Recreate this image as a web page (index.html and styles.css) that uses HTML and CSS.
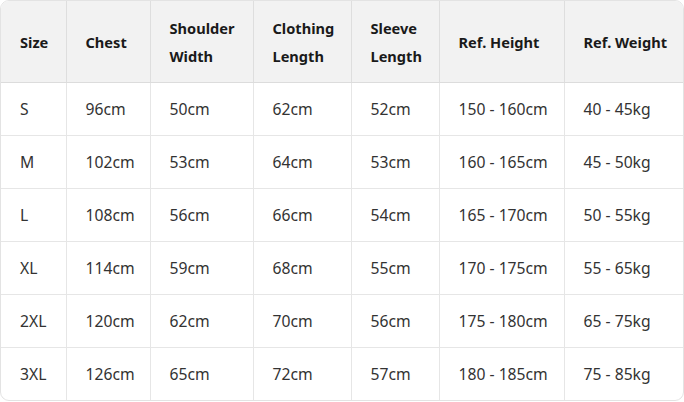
FILE: index.html
```html
<!DOCTYPE html>
<html>
<head>
<meta charset="utf-8">
<link rel="stylesheet" href="styles.css">
</head>
<body>
<div class="wrap">
<table class="size-table">
<colgroup>
<col class="c1"><col class="c2"><col class="c3"><col class="c4"><col class="c5"><col class="c6"><col class="c7">
</colgroup>
<thead>
<tr><th>Size</th><th>Chest</th><th>Shoulder Width</th><th>Clothing Length</th><th>Sleeve Length</th><th>Ref. Height</th><th>Ref. Weight</th></tr>
</thead>
<tbody>
<tr><td>S</td><td>96cm</td><td>50cm</td><td>62cm</td><td>52cm</td><td>150 - 160cm</td><td>40 - 45kg</td></tr>
<tr><td>M</td><td>102cm</td><td>53cm</td><td>64cm</td><td>53cm</td><td>160 - 165cm</td><td>45 - 50kg</td></tr>
<tr><td>L</td><td>108cm</td><td>56cm</td><td>66cm</td><td>54cm</td><td>165 - 170cm</td><td>50 - 55kg</td></tr>
<tr><td>XL</td><td>114cm</td><td>59cm</td><td>68cm</td><td>55cm</td><td>170 - 175cm</td><td>55 - 65kg</td></tr>
<tr><td>2XL</td><td>120cm</td><td>62cm</td><td>70cm</td><td>56cm</td><td>175 - 180cm</td><td>65 - 75kg</td></tr>
<tr><td>3XL</td><td>126cm</td><td>65cm</td><td>72cm</td><td>57cm</td><td>180 - 185cm</td><td>75 - 85kg</td></tr>
</tbody>
</table>
</div>
</body>
</html>
```

FILE: styles.css
```css
html, body {
  margin: 0;
  padding: 0;
  background: #ffffff;
}
.wrap {
  width: 684px;
  box-sizing: border-box;
  border: 1px solid #e3e3e3;
  border-radius: 9px;
  overflow: hidden;
}
.size-table {
  width: 100%;
  border-collapse: collapse;
  table-layout: fixed;
  font-family: "Noto Sans", "Open Sans", sans-serif;
  font-size: 15.7px;
  line-height: 28px;
  color: #333333;
}
.c1 { width: 65px; }
.c2 { width: 84px; }
.c3 { width: 103px; }
.c4 { width: 98px; }
.c5 { width: 88px; }
.c6 { width: 125px; }
.c7 { width: auto; }
.size-table th,
.size-table td {
  text-align: left;
  padding: 12px 0 12px 19px;
  border-right: 1px solid #e6e6e6;
  border-bottom: 1px solid #e6e6e6;
  vertical-align: middle;
}
.size-table th:last-child,
.size-table td:last-child {
  border-right: none;
}
.size-table tbody tr:last-child td {
  border-bottom: none;
}
.size-table th {
  background: #f2f2f2;
  color: #1a1a1a;
  font-size: 14.6px;
  font-weight: 700;
  padding-top: 13px;
  border-bottom: 1px solid #dcdcdc;
  border-right-color: #dedede;
}
```
